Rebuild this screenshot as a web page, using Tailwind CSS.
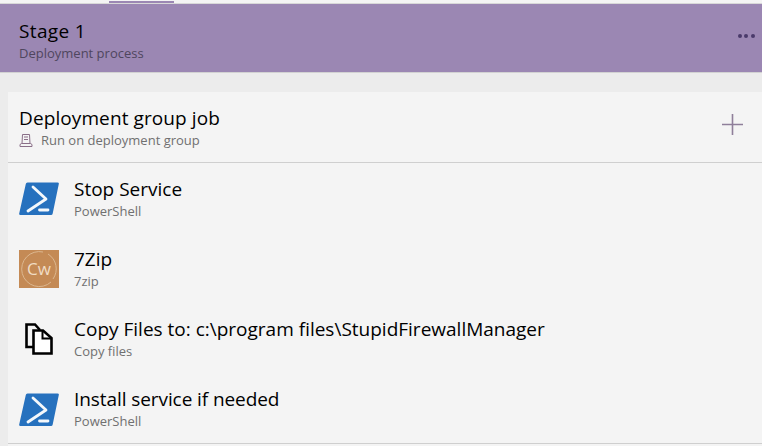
<!DOCTYPE html>
<html lang="en">
<head>
    <meta charset="UTF-8">
    <title>Deployment process</title>
    <script src="https://cdn.jsdelivr.net/npm/@tailwindcss/browser@4"></script>
</head>
<body class="bg-[#ececec] font-['Open_Sans',sans-serif] overflow-hidden">
    <div class="w-[762px] h-[446px] flex flex-col overflow-hidden">
        <!-- Tab strip -->
        <div class="h-[4px] shrink-0 bg-[#f4f4f4] border-b border-[#d8d8d8] pl-[109px] pt-[1px]">
            <div class="w-[65px] h-[2px] bg-[#9b87b3]"></div>
        </div>

        <!-- Stage header -->
        <div class="h-[69px] shrink-0 bg-[#9b87b3] border-b border-[#d2d2d2] pl-[19px] pr-[7px] flex justify-between">
            <div class="pt-[14px]">
                <div class="text-[19px] leading-[26px] tracking-[0.35px] text-black">Stage 1</div>
                <div class="text-[13px] leading-[17px] text-[#4f465e] mt-[1px]">Deployment process</div>
            </div>
            <div class="flex gap-[2.7px] pt-[30px]">
                <span class="w-[4px] h-[4px] rounded-full bg-[#4a3a6b]"></span>
                <span class="w-[4px] h-[4px] rounded-full bg-[#4a3a6b]"></span>
                <span class="w-[4px] h-[4px] rounded-full bg-[#4a3a6b]"></span>
            </div>
        </div>

        <!-- Job card -->
        <div class="ml-[8px] mt-[19px] bg-[#f4f4f4] grow">
            <div class="h-[71px] border-b border-[#cfcfcf] pl-[11px] pr-[19px] pt-[13px] flex justify-between">
                <div>
                    <div class="text-[19px] leading-[26px] tracking-[0.1px] text-black">Deployment group job</div>
                    <div class="flex items-center gap-[7px] text-[13px] leading-[17px] text-[#707070] mt-[1px]">
                        <svg width="15" height="15" viewBox="0 0 15 15" fill="none" stroke="#8a6f88" stroke-width="1"><path d="M3.500 1.500h7l.5 9h-8zM5 4h4M5 6.500h4M1 13.500h12v-2l-1.500-1h-9l-1.500 1z"/></svg>
                        <span>Run on deployment group</span>
                    </div>
                </div>
                <svg class="mt-[9px]" width="21" height="21" viewBox="0 0 21 21" stroke="#8f7f9a" stroke-width="1.600"><path d="M10.500 0v21M0 10.500h21"/></svg>
            </div>

            <div class="border-b border-[#cfcfcf] h-[281px]">
                <!-- Stop Service -->
                <div class="h-[70px] flex pl-[11px]">
                    <svg class="mt-[19px] shrink-0" width="40" height="34" viewBox="0 0 40 34"><path d="M6.800 2Q7 .5 8.500 .5H38.500Q40.200 .5 39.800 2L33.700 31.500Q33.400 33 32 33H1.500Q-.2 33 .2 31.500Z" fill="#2671be"/><path d="M14 5l13 12L9 29" fill="none" stroke="#f4f8fb" stroke-width="2.800" stroke-linecap="round" stroke-linejoin="round"/><path d="M20.500 28H29" stroke="#f4f8fb" stroke-width="2.800" stroke-linecap="round"/></svg>
                    <div class="ml-[15px] pt-[13px]">
                        <div class="text-[19px] leading-[26px] text-black">Stop Service</div>
                        <div class="text-[13px] leading-[17px] text-[#707070] mt-[1px]">PowerShell</div>
                    </div>
                </div>
                <!-- 7Zip -->
                <div class="h-[70px] flex pl-[11px]">
                    <svg class="mt-[17px] shrink-0" width="40" height="38" viewBox="0 0 40 38"><rect width="40" height="38" fill="#c48a55"/><path d="M24 2A17.500 17.500 0 1 0 32 32M34 29A17.500 17.500 0 0 0 29 4" fill="none" stroke="#dcb78f" stroke-width="1"/><text x="20" y="25" text-anchor="middle" font-family="Open Sans" font-size="17" fill="#f0dcc4">Cw</text></svg>
                    <div class="ml-[15px] pt-[13px]">
                        <div class="text-[19px] leading-[26px] text-black">7Zip</div>
                        <div class="text-[13px] leading-[17px] text-[#707070] mt-[1px]">7zip</div>
                    </div>
                </div>
                <!-- Copy Files -->
                <div class="h-[70px] flex pl-[11px]">
                    <svg class="mt-[20px] ml-[6px] shrink-0" width="28" height="32" viewBox="0 0 28 32"><path d="M8 24H1.500V1.500H10L15 7" fill="#f4f4f4" stroke="#000" stroke-width="2.600"/><path d="M8.500 7.500H18L26.500 15V30.500H8.500Z" fill="#fff" stroke="#000" stroke-width="2.600"/><path d="M17.500 7.500V15.500H26" fill="none" stroke="#000" stroke-width="2"/></svg>
                    <div class="ml-[21px] pt-[13px]">
                        <div class="text-[19px] leading-[26px] text-black whitespace-nowrap">Copy Files to: c:\program files\StupidFirewallManager</div>
                        <div class="text-[13px] leading-[17px] text-[#707070] mt-[1px]">Copy files</div>
                    </div>
                </div>
                <!-- Install service -->
                <div class="h-[70px] flex pl-[11px]">
                    <svg class="mt-[20px] shrink-0" width="40" height="34" viewBox="0 0 40 34"><path d="M6.800 2Q7 .5 8.500 .5H38.500Q40.200 .5 39.800 2L33.700 31.500Q33.400 33 32 33H1.500Q-.2 33 .2 31.500Z" fill="#2671be"/><path d="M14 5l13 12L9 29" fill="none" stroke="#f4f8fb" stroke-width="2.800" stroke-linecap="round" stroke-linejoin="round"/><path d="M20.500 28H29" stroke="#f4f8fb" stroke-width="2.800" stroke-linecap="round"/></svg>
                    <div class="ml-[15px] pt-[13px]">
                        <div class="text-[19px] leading-[26px] tracking-[-0.08px] text-black">Install service if needed</div>
                        <div class="text-[13px] leading-[17px] text-[#707070] mt-[1px]">PowerShell</div>
                    </div>
                </div>
            </div>
        </div>
    </div>
</body>
</html>
